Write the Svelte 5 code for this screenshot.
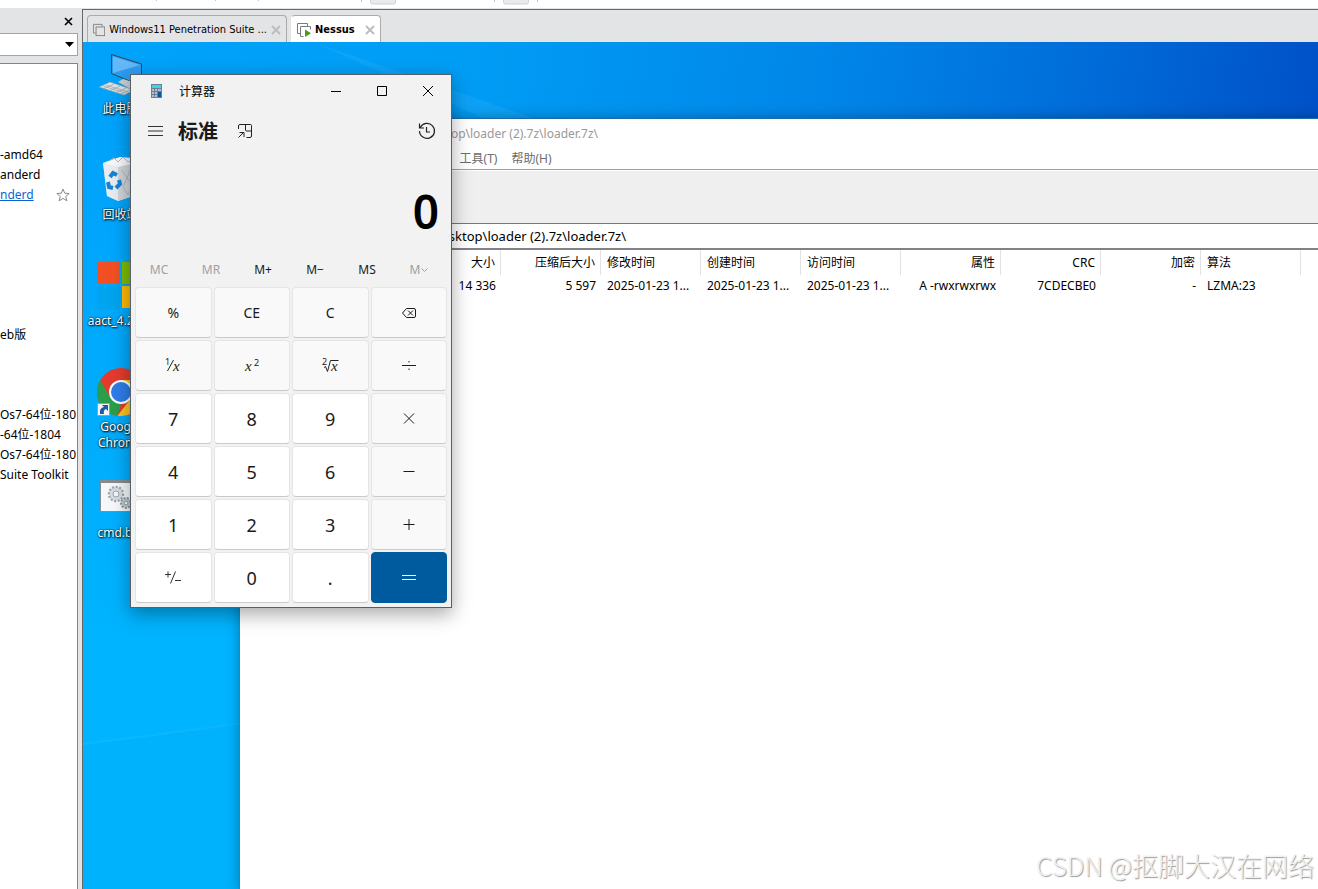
<script lang="ts">
  type Key = { id: string; label?: string; kind: 'fn' | 'num' | 'eq' };

  const library = [
    [{ name: '-amd64' }, { name: 'anderd' }, { name: 'nderd', active: true }],
    [{ name: 'eb版' }],
    [{ name: 'Os7-64位-180' }, { name: '-64位-1804' }, { name: 'Os7-64位-180' }, { name: 'Suite Toolkit' }]
  ];

  const shortcuts = [
    { id: 'computer', label: '此电脑' },
    { id: 'recycle', label: '回收站' },
    { id: 'windows', label: 'aact_4.2.7...' },
    { id: 'chrome', label: 'Google Chrome' },
    { id: 'batch', label: 'cmd.bat' }
  ];

  const menus = ['文件(F)', '编辑(E)', '查看(V)', '书签(A)', '工具(T)', '帮助(H)'];

  const columns = [
    { title: '大小', value: '14 336', align: 'right' },
    { title: '压缩后大小', value: '5 597', align: 'right' },
    { title: '修改时间', value: '2025-01-23 1...', align: 'left' },
    { title: '创建时间', value: '2025-01-23 1...', align: 'left' },
    { title: '访问时间', value: '2025-01-23 1...', align: 'left' },
    { title: '属性', value: 'A -rwxrwxrwx', align: 'right' },
    { title: 'CRC', value: '7CDECBE0', align: 'right' },
    { title: '加密', value: '-', align: 'right' },
    { title: '算法', value: 'LZMA:23', align: 'left' }
  ];

  const memory = [
    { label: 'MC', off: true },
    { label: 'MR', off: true },
    { label: 'M+', off: false },
    { label: 'M−', off: false },
    { label: 'MS', off: false },
    { label: 'M', off: true, chevron: true }
  ];

  const keys: Key[] = [
    { id: 'percent', label: '%', kind: 'fn' },
    { id: 'ce', label: 'CE', kind: 'fn' },
    { id: 'c', label: 'C', kind: 'fn' },
    { id: 'back', kind: 'fn' },
    { id: 'inverse', kind: 'fn' },
    { id: 'square', kind: 'fn' },
    { id: 'root', kind: 'fn' },
    { id: 'divide', kind: 'fn' },
    { id: '7', label: '7', kind: 'num' },
    { id: '8', label: '8', kind: 'num' },
    { id: '9', label: '9', kind: 'num' },
    { id: 'multiply', kind: 'fn' },
    { id: '4', label: '4', kind: 'num' },
    { id: '5', label: '5', kind: 'num' },
    { id: '6', label: '6', kind: 'num' },
    { id: 'minus', kind: 'fn' },
    { id: '1', label: '1', kind: 'num' },
    { id: '2', label: '2', kind: 'num' },
    { id: '3', label: '3', kind: 'num' },
    { id: 'plus', kind: 'fn' },
    { id: 'negate', kind: 'num' },
    { id: '0', label: '0', kind: 'num' },
    { id: '.', label: '.', kind: 'num' },
    { id: 'equals', kind: 'eq' }
  ];

  // one 16x16 stroke path for each drawn key
  const glyphs: Record<string, string> = {
    back: 'M5.5 3.5h7.5q1.5 0 1.5 1.5v6q0 1.5-1.5 1.5H5.5L1.5 8zM7 5.5l5 5M12 5.5l-5 5',
    divide: 'M1 7.500h14M8 3v1.500M8 10.500v1.500',
    multiply: 'M3 2.500l10 10M13 2.500l-10 10',
    minus: 'M2.500 7.500h11',
    plus: 'M2.500 7.500h11M8 2v11',
    equals: 'M1 5.500h14M1 9.500h14'
  };

  let display = $state('0');

  function press(key: Key) {
    if (key.id === 'c' || key.id === 'ce') display = '0';
    else if (key.id === 'back') display = display.slice(0, -1) || '0';
    else if (/^\d$/.test(key.id)) display = display === '0' ? key.id : display + key.id;
    else if (key.id === '.' && !display.includes('.')) display += '.';
  }
</script>

<div class="app">
  <svg class="toolstrip" height="8" aria-hidden="true">
    <path d="M156.500 0v1M215.500 0v1M258.500 0v1M361.500 0v2M494.500 0v2M537.500 0v2" stroke="#c4c4c4" />
    <rect x="370.500" y="-6" width="25" height="10" rx="2" fill="#e9eaeb" stroke="#d0d2d4" />
    <rect x="503.500" y="-6" width="25" height="10" rx="2" fill="#e9eaeb" stroke="#d0d2d4" />
  </svg>

  <div class="body">
    <aside class="library">
      <div class="library-head">
        <button type="button" aria-label="关闭库">
          <svg width="9" height="9" viewBox="0 0 9 9"><path d="M1 1l7 7M8 1l-7 7" stroke="#000" stroke-width="1.600" /></svg>
        </button>
      </div>
      <div class="search">
        <select aria-label="搜索"><option></option></select>
        <svg width="9" height="5" viewBox="0 0 9 5" aria-hidden="true"><path d="M0 0h9L4.500 5z" /></svg>
      </div>
      <div class="tree">
        {#each library as group}
          <ul>
            {#each group as vm}
              <li>
                {#if vm.active}
                  <a href="#vm">{vm.name}</a>
                  <svg width="14" height="14" viewBox="0 0 14 14" aria-hidden="true">
                    <path d="M7 1l1.700 4.200 4.500.3-3.500 2.900 1.200 4.400L7 10.400l-3.900 2.400 1.200-4.400L.8 5.500l4.500-.3z" fill="none" stroke="#8a8a8a" />
                  </svg>
                {:else}
                  {vm.name}
                {/if}
              </li>
            {/each}
          </ul>
        {/each}
      </div>
    </aside>

    <main>
      <div class="tabs">
        <div class="tab wide">
          <svg width="14" height="14" viewBox="0 0 14 14" fill="none" stroke="#7a7a7a" aria-hidden="true">
            <path d="M3 10.500H.5V.5h10V3" /><rect x="3.500" y="3.500" width="10" height="10" />
          </svg>
          <span>Windows11 Penetration Suite ...</span>
          <button type="button" aria-label="关闭标签">
            <svg width="10" height="10" viewBox="0 0 10 10"><path d="M1 1l8 8M9 1l-8 8" stroke="#bdbdbd" stroke-width="2" /></svg>
          </button>
        </div>
        <div class="tab current">
          <svg width="14" height="14" viewBox="0 0 14 14" fill="none" stroke="#7a7a7a" aria-hidden="true">
            <path d="M3 10.500H.5V.5h10V3M6.500 13.500h-3v-10h10v3" /><path d="M8 6.500v7.500l6-3.700z" fill="#4a9b12" stroke="none" />
          </svg>
          <span>Nessus</span>
          <button type="button" aria-label="关闭标签">
            <svg width="10" height="10" viewBox="0 0 10 10"><path d="M1 1l8 8M9 1l-8 8" stroke="#bdbdbd" stroke-width="2" /></svg>
          </button>
        </div>
      </div>

      <div class="desktop">
        <svg class="beams" aria-hidden="true">
          <path d="M230 0L450 76H400z" fill="#3bb8ff" opacity="0.220" />
          <path d="M0 704L156 682v207H0z" fill="#00a8f4" opacity="0.250" />
          <path d="M0 702L156 682" stroke="#2fc2ff" stroke-width="2" opacity="0.250" />
        </svg>

        <ul class="shortcuts">
          {#each shortcuts as item}
            <li>
              <svg width="48" height="48" viewBox="0 0 48 48" aria-hidden="true">
                {#if item.id === 'computer'}
                  <path d="M14.500 4.500l30 9.500v22l-30-12.500z" fill="#2c9bf0" stroke="#3b4650" />
                  <path d="M16 6.500l27 8.500-27 8z" fill="#63b8f7" />
                  <path d="M21 32l5-3 19 6v5l-8 1z" fill="#c9ced2" />
                  <path d="M2 37l11-5 24 8-10 5z" fill="#dfe3e6" stroke="#8f979d" stroke-width=".6" />
                  <path d="M6 36l22 7M9 35l22 7M6 39l11-5M12 41l11-5M18 43l11-5M24 44l11-5" stroke="#9aa2a8" stroke-width=".7" />
                {:else if item.id === 'recycle'}
                  <path d="M6 7l15 3 22-4-4 33-18 6-11-5z" fill="#e2e6e9" />
                  <path d="M21 10l22-4-4 33-18 6z" fill="#cfd4d8" />
                  <path d="M6 7l8-3 9-3 12 1 8 4-22 5z" fill="#f7f8f9" />
                  <path d="M12 5l5-3 4 4 5-5 5 5 6-3M25 14l5 8-4 9 5 8M34 12l-4 10 6 7-5 10" fill="none" stroke="#b1b7bb" />
                  <path d="M6 7l15 3v35l-11-5z" fill="#edf0f2" opacity=".6" />
                  <g fill="none" stroke="#1484d8" stroke-width="4">
                    <path d="M13 21l3-4 4 2" /><path d="M22 24l1 4-4 4" /><path d="M11 26l1 5 4 1" />
                  </g>
                {:else if item.id === 'windows'}
                  <path d="M0 0h23v22H0z" fill="#f25022" /><path d="M25 0h23v22H25z" fill="#7fba00" />
                  <path d="M0 24h23v23H0z" fill="#00a4ef" /><path d="M25 24h23v22H25z" fill="#ffb900" />
                {:else if item.id === 'chrome'}
                  <circle cx="24" cy="24" r="24" fill="#e33b2e" />
                  <path d="M3.200 12L13.600 30 24 36l-3.500 11.700A24 24 0 0 1 3.200 12z" fill="#2b9e4b" />
                  <path d="M24 12h20.800A24 24 0 0 1 20.500 47.700L34.400 30z" fill="#fcc31e" />
                  <circle cx="24" cy="24" r="12" fill="#fff" /><circle cx="24" cy="24" r="10" fill="#2d7de9" />
                  <path d="M.5 35.500h12v12H.5z" fill="#f2f6fa" stroke="#8aa3b8" />
                  <path d="M3 46q-1-6 4-7l-2-2h6v6l-2-2q-3 1-2 5z" fill="#22599c" />
                {:else}
                  <path d="M3.500 6.500h44v31h-44z" fill="#f6f7f8" stroke="#858b90" /><path d="M3 6h45v3H3z" fill="#858b90" />
                  <circle cx="19" cy="20" r="7" fill="#d5dde2" stroke="#98a5ad" stroke-width="2.500" stroke-dasharray="2 1.600" />
                  <circle cx="19" cy="20" r="6" fill="#d5dde2" /><circle cx="19" cy="20" r="3" fill="#f6f7f8" stroke="#98a5ad" />
                  <circle cx="29" cy="29" r="5" fill="#c3cdd3" stroke="#8b99a2" stroke-width="2" stroke-dasharray="2 1.400" />
                  <circle cx="29" cy="29" r="2" fill="#f6f7f8" stroke="#8b99a2" />
                {/if}
              </svg>
              <span>{item.label}</span>
            </li>
          {/each}
        </ul>

        <section class="archive" aria-label="7-Zip">
          <div class="archive-title">Desktop\loader (2).7z\loader.7z\</div>
          <nav class="menu">
            {#each menus as menu}
              <button type="button">{menu}</button>
            {/each}
          </nav>
          <div class="archive-tools"></div>
          <input class="address" aria-label="路径" value="Desktop\loader (2).7z\loader.7z\" />
          <table>
            <colgroup>
              <col class="name" />
              {#each columns as _}
                <col class="data" />
              {/each}
              <col />
            </colgroup>
            <thead>
              <tr>
                <td></td>
                {#each columns as col}
                  <th class:right={col.align === 'right'}>{col.title}</th>
                {/each}
                <td></td>
              </tr>
            </thead>
            <tbody>
              <tr>
                <td></td>
                {#each columns as col}
                  <td class:right={col.align === 'right'}>{col.value}</td>
                {/each}
                <td></td>
              </tr>
            </tbody>
          </table>
        </section>

        <section class="calc" aria-label="计算器">
          <header class="caption">
            <svg class="calc-icon" width="12" height="16" viewBox="0 0 12 16" aria-hidden="true">
              <path d="M0 1h11v14H0z" fill="#6e7f91" /><path d="M1 2h9v3H1z" fill="#3fd0f5" />
              <path d="M1 6h2v2H1zM4 6h2v2H4zM7 6h3v2H7zM1 9h2v2H1zM4 9h2v2H4zM1 12h2v2H1zM4 12h2v2H4z" fill="#b4bfca" />
              <path d="M7 9h3v5H7z" fill="#0b55a5" />
            </svg>
            <span>计算器</span>
            <button type="button" aria-label="最小化">
              <svg width="10" height="10" viewBox="0 0 10 10"><path d="M0 5.500h10" stroke="#000" /></svg>
            </button>
            <button type="button" aria-label="最大化">
              <svg width="10" height="10" viewBox="0 0 10 10"><path d="M.5.5h9v9h-9z" fill="none" stroke="#000" /></svg>
            </button>
            <button type="button" aria-label="关闭">
              <svg width="10" height="10" viewBox="0 0 10 10"><path d="M0 0l10 10M10 0L0 10" stroke="#000" /></svg>
            </button>
          </header>

          <div class="mode">
            <button type="button" aria-label="导航">
              <svg width="16" height="12" viewBox="0 0 16 12"><path d="M1 1.500h15M1 6h15M1 10.500h15" stroke="#333" /></svg>
            </button>
            <h1>标准</h1>
            <button type="button" aria-label="置顶">
              <svg width="16" height="16" viewBox="0 0 16 16" fill="none" stroke="#222">
                <path d="M1.500 6V3q0-1.500 1.500-1.500h10.500q1 0 1 1v10.500q0 1.500-1.500 1.500H9.500M8.500 1.500v5.500q0 1 1 1h5M1.500 14.500l5-5M2.500 9.500h4.500v4.500" />
              </svg>
            </button>
            <button type="button" class="history" aria-label="历史记录">
              <svg width="18" height="18" viewBox="0 0 18 18" fill="none" stroke="#222">
                <path d="M2.300 5.500A7.500 7.500 0 1 1 1.500 9M1.500 1.500v4.500H6M8.500 5v5H12" stroke-width="1.200" />
              </svg>
            </button>
          </div>

          <output>{display}</output>

          <div class="memory">
            {#each memory as m}
              <button type="button" disabled={m.off}>
                {m.label}
                {#if m.chevron}
                  <svg width="7" height="5" viewBox="0 0 7 5" aria-hidden="true"><path d="M.5.5l3 3 3-3" fill="none" stroke="#a0a0a0" /></svg>
                {/if}
              </button>
            {/each}
          </div>

          <div class="keys">
            {#each keys as key}
              <button type="button" class={key.kind} aria-label={key.id} onclick={() => press(key)}>
                {#if key.label}
                  {key.label}
                {:else if key.id === 'inverse'}
                  <svg class="math" width="18" height="18" viewBox="0 0 18 18">
                    <text x="1" y="8" class="small">1</text><path d="M3.500 14L9.500 3" stroke="#222" /><text x="9" y="14" class="var">x</text>
                  </svg>
                {:else if key.id === 'square'}
                  <svg class="math" width="18" height="18" viewBox="0 0 18 18">
                    <text x="2" y="14" class="var">x</text><text x="11" y="9" class="small">2</text>
                  </svg>
                {:else if key.id === 'root'}
                  <svg class="math" width="18" height="18" viewBox="0 0 18 18">
                    <text x="1" y="8" class="small">2</text>
                    <path d="M3 10.500l1.500-1L6.500 14.500 9.500 3.500h8" fill="none" stroke="#222" /><text x="10" y="14" class="var">x</text>
                  </svg>
                {:else if key.id === 'negate'}
                  <svg width="18" height="18" viewBox="0 0 18 18" fill="none" stroke="#333">
                    <path d="M1 5.500h6M4 2.500v6M11.500 2.500l-5 12M11 11.500h6" />
                  </svg>
                {:else}
                  <svg width="16" height="16" viewBox="0 0 16 16" fill="none" stroke="currentColor"><path d={glyphs[key.id]} /></svg>
                {/if}
              </button>
            {/each}
          </div>
        </section>

        <div class="watermark">CSDN @抠脚大汉在网络</div>
      </div>
    </main>
  </div>
</div>

<style>
  :global(body) {
    margin: 0;
  }

  .app {
    display: flex;
    flex-direction: column;
    height: 100vh;
    overflow: hidden;
    background: #e3e4e6;
    color: #000;
    font-family: 'Noto Sans', 'Noto Sans CJK SC', sans-serif;
    font-size: 12px;
    line-height: 16px;
  }

  button {
    display: flex;
    align-items: center;
    justify-content: center;
    margin: 0;
    padding: 0;
    border: 0;
    background: none;
    color: inherit;
    font: inherit;
  }

  ul {
    list-style: none;
    margin: 0;
    padding: 0;
  }

  .toolstrip {
    display: block;
    width: 100%;
    flex: none;
    background: #fff;
  }

  .body {
    display: flex;
    flex: 1;
    min-height: 0;
    padding-top: 1px;
  }

  .library {
    display: flex;
    flex-direction: column;
    flex: none;
    width: 82px;
  }

  .library-head {
    display: flex;
    justify-content: flex-end;
    align-items: center;
    height: 24px;
    padding-right: 9px;
  }

  .search {
    position: relative;
    margin-right: 4px;
    height: 23px;
  }

  .search select {
    display: block;
    appearance: none;
    box-sizing: border-box;
    width: 100%;
    height: 100%;
    border: 1px solid #a3a3a6;
    border-left: 0;
    border-radius: 0;
    background: #fff;
  }

  .search svg {
    position: absolute;
    right: 4px;
    top: 9px;
    pointer-events: none;
  }

  .tree {
    flex: 1;
    margin: 7px 4px 0 0;
    padding-top: 81px;
    border-top: 1px solid #828488;
    border-right: 1px solid #828488;
    background: #fff;
    overflow: hidden;
    white-space: nowrap;
  }

  .tree ul + ul {
    margin-top: 60px;
  }

  .tree ul:nth-child(2) {
    margin-top: 120px;
  }

  .tree li {
    display: flex;
    align-items: center;
    justify-content: space-between;
    height: 20px;
    padding-right: 7px;
  }

  .tree a {
    color: #0a64d0;
  }

  main {
    display: flex;
    flex-direction: column;
    flex: 1;
    min-width: 0;
    border-top: 1px solid #66686b;
    border-left: 1px solid #66686b;
  }

  .tabs {
    display: flex;
    align-items: flex-end;
    gap: 4px;
    height: 32px;
    padding-left: 4px;
  }

  .tab {
    display: flex;
    align-items: center;
    gap: 4px;
    box-sizing: border-box;
    height: 27px;
    padding: 1px 5px 0;
    border: 1px solid #a9abad;
    border-bottom: 0;
    border-radius: 4px 4px 0 0;
    font-family: 'DejaVu Sans Condensed', 'Noto Sans', sans-serif;
    font-size: 11px;
    white-space: nowrap;
  }

  .tab.wide {
    width: 200px;
  }

  .tab.current {
    width: 90px;
    background: #fff;
    border-left-color: #fff;
    font-weight: bold;
  }

  .tab span {
    flex: 1;
  }

  .desktop {
    position: relative;
    flex: 1;
    overflow: hidden;
    background:
      linear-gradient(to bottom, rgba(0, 180, 255, 0) 76px, #00b4ff 600px),
      linear-gradient(100deg, #00a3fb 0%, #009df5 28%, #0086e8 54%, #006bd8 74%, #004cc4 93%);
  }

  .beams {
    position: absolute;
    inset: 0;
    width: 100%;
    height: 100%;
  }

  .shortcuts {
    position: relative;
    width: 75px;
    padding-top: 8px;
  }

  .shortcuts li {
    display: flex;
    flex-direction: column;
    align-items: center;
    gap: 3px;
    height: 106px;
    color: #fff;
    text-align: center;
    text-shadow: 1px 1px 2px #000, 0 0 2px #000;
  }

  .archive {
    position: absolute;
    inset: 76px 0 0 156px;
    border-top: 1px solid #1c6ba8;
    border-left: 1px solid #4a7a98;
    background: #fff;
    box-shadow: 0 0 12px rgba(0, 0, 0, 0.3);
    white-space: nowrap;
  }

  .archive-title {
    width: 358px;
    padding: 7px 0;
    color: #999;
    text-align: right;
  }

  .menu {
    display: grid;
    grid-template-columns: repeat(6, 53px);
    height: 20px;
    color: #6d6d6d;
  }

  .archive-tools {
    height: 53px;
    border-top: 1px solid #a0a0a0;
    border-bottom: 1px solid #777;
    background: #efefef;
    box-shadow: inset 0 1px #fff;
  }

  .address {
    display: block;
    box-sizing: border-box;
    width: 100%;
    height: 26px;
    padding: 0 0 0 192px;
    border: 0;
    border-bottom: 2px solid #828286;
    color: #000;
    font: inherit;
    font-size: 13px;
  }

  table {
    width: 100%;
    table-layout: fixed;
    border-collapse: separate;
    border-spacing: 0;
  }

  col.name {
    width: 161px;
  }

  col.data {
    width: 100px;
  }

  th,
  td {
    height: 22px;
    padding: 0 5px 0 6px;
    font-weight: normal;
    text-align: left;
  }

  th {
    height: 25px;
    border-right: 1px solid #e2e2e2;
  }

  .right {
    text-align: right;
  }

  .calc {
    position: absolute;
    left: 47px;
    top: 32px;
    width: 320px;
    border: 1px solid #55606a;
    background: #f2f2f2;
    box-shadow: 0 6px 18px rgba(0, 0, 0, 0.35);
  }

  .caption {
    display: flex;
    align-items: center;
    height: 32px;
    padding-left: 20px;
  }

  .caption span {
    flex: 1;
    padding: 2px 0 0 16px;
  }

  .caption button {
    width: 46px;
    height: 32px;
  }

  .mode {
    display: flex;
    align-items: center;
    height: 48px;
    padding: 0 4px;
  }

  .mode button {
    width: 40px;
    height: 40px;
  }

  .mode h1 {
    margin: 0 7px 0 3px;
    padding-top: 2px;
    color: #1a1a1a;
    font-size: 20px;
    line-height: 28px;
  }

  .mode .history {
    margin-left: auto;
  }

  output {
    display: block;
    padding: 26px 12px 12px;
    font-size: 46px;
    font-weight: 600;
    line-height: 60px;
    text-align: right;
  }

  .memory {
    display: grid;
    grid-template-columns: repeat(6, 52px);
    height: 34px;
    padding-left: 2px;
    color: #1a1a1a;
  }

  .memory button {
    gap: 1px;
  }

  .memory button:disabled {
    color: #a0a0a0;
  }

  .keys {
    display: grid;
    grid-template-columns: repeat(4, 1fr);
    gap: 2px;
    padding: 0 4px 4px;
  }

  .keys button {
    box-sizing: border-box;
    height: 51px;
    border: 1px solid #e5e5e5;
    border-bottom-color: #cacaca;
    border-radius: 4px;
    background: #f9f9f9;
    color: #1a1a1a;
    font-size: 14px;
  }

  .keys .num {
    background: #fff;
    font-size: 18px;
  }

  .keys .eq {
    border-color: #005a9e;
    background: #005a9e;
    color: #fff;
  }

  .math {
    overflow: visible;
    fill: #222;
  }

  .small {
    font-size: 9px;
  }

  .var {
    font-family: 'Liberation Serif', serif;
    font-size: 15px;
    font-style: italic;
  }

  .watermark {
    position: absolute;
    right: 4px;
    bottom: 6px;
    color: #f0f0f0;
    font-family: 'Noto Sans CJK SC', sans-serif;
    font-size: 26px;
    font-weight: 300;
    line-height: 36px;
    text-shadow: 1px 1px 1px #999;
  }
</style>
